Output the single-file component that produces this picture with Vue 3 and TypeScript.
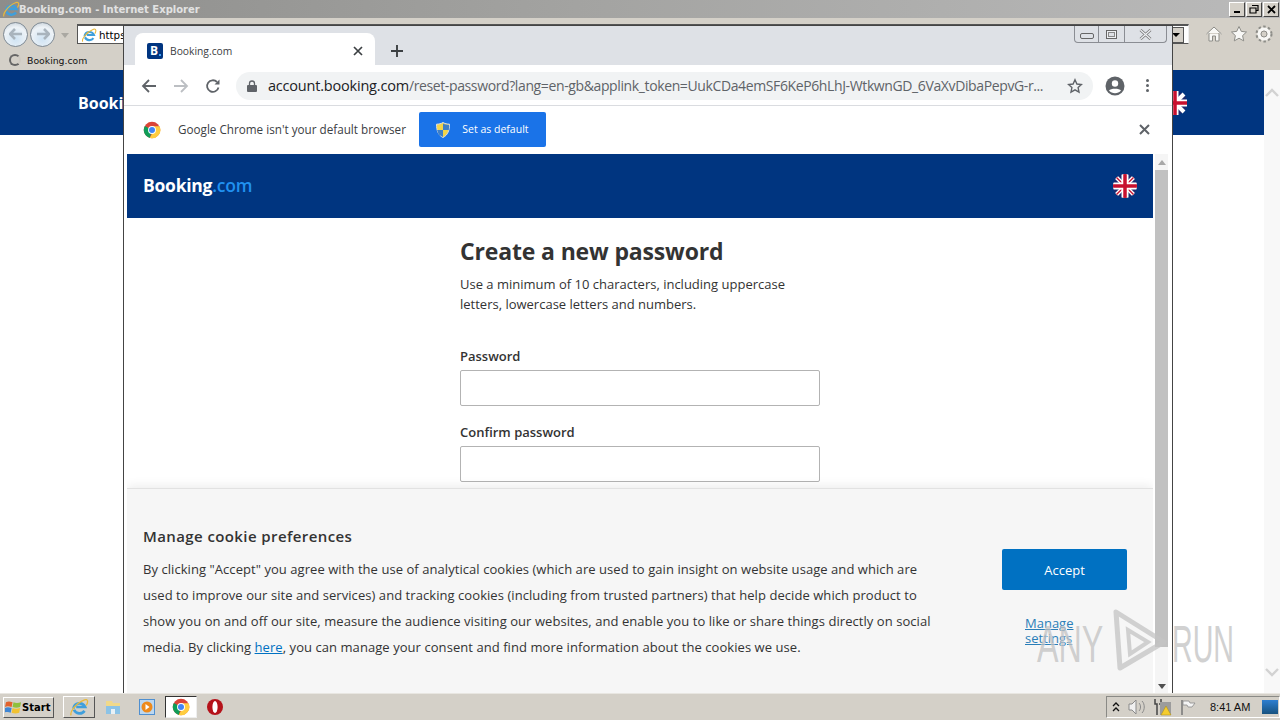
<script setup lang="ts">
const lines = [
  'By clicking "Accept" you agree with the use of analytical cookies (which are used to gain insight on website usage and which are',
  'used to improve our site and services) and tracking cookies (including from trusted partners) that help decide which product to',
  'show you on and off our site, measure the audience visiting our websites, and enable you to like or share things directly on social',
]
</script>

<template>
  <div class="desktop">
    <div class="ie-window">
      <div class="ie-title">
        <svg class="ie-logo" width="18" height="18" viewBox="0 0 18 18">
          <path d="M4 10.500a5.500 5.500 0 0 1 10.500-1.500H6.500M14 12.500a5.500 5.500 0 0 1-9.500-1" fill="none" stroke="#3f9fdc" stroke-width="2.400" />
          <path d="M2 16.500c-1.500-2 3-10.500 12-14 3-1 3.500 2 1.500 5" fill="none" stroke="#e8b93c" stroke-width="1.200" />
        </svg>
        <span class="ie-title-text">Booking.com - Internet Explorer</span>
        <div class="win-btns">
          <span class="win-btn"><i class="b-min"></i></span>
          <span class="win-btn">
            <svg width="10" height="10" viewBox="0 0 10 10"><path d="M3 1.500h6v5H7M1 4h6v5H1z" fill="none" stroke="#000" stroke-width="1.200" /></svg>
          </span>
          <span class="win-btn">
            <svg width="9" height="9" viewBox="0 0 9 9"><path d="m1 1 7 7M8 1 1 8" stroke="#000" stroke-width="1.800" /></svg>
          </span>
        </div>
      </div>
      <div class="ie-toolbar">
        <span class="nav-orb">
          <svg width="14" height="12" viewBox="0 0 14 12"><path d="M1 6h12M6 1 1 6l5 5" fill="none" stroke="#a9b4bd" stroke-width="2.600" /></svg>
        </span>
        <span class="nav-orb">
          <svg width="14" height="12" viewBox="0 0 14 12"><path d="M1 6h12M8 1l5 5-5 5" fill="none" stroke="#a9b4bd" stroke-width="2.600" /></svg>
        </span>
        <span class="nav-drop"></span>
        <div class="ie-address">
          <svg width="16" height="16" viewBox="0 0 18 18">
            <path d="M4 10.500a5.500 5.500 0 0 1 10.500-1.500H6.500M14 12.500a5.500 5.500 0 0 1-9.500-1" fill="none" stroke="#3f9fdc" stroke-width="2.400" />
            <path d="M2 16.500c-1.500-2 3-10.500 12-14 3-1 3.500 2 1.500 5" fill="none" stroke="#e8b93c" stroke-width="1.200" />
          </svg>
          <span>https</span>
          <span class="addr-drop"></span>
        </div>
        <div class="ie-tools">
          <svg width="18" height="18" viewBox="0 0 18 18"><path d="M1.500 9 9 2l7.500 7M4 8v8h3.500v-5h3v5H14V8" fill="#f8f8f6" stroke="#8d8d88" /></svg>
          <svg width="18" height="18" viewBox="0 0 18 18"><path d="m9 1.500 2.300 4.900 5.200.6-3.900 3.600 1.100 5.300L9 13.200l-4.700 2.700 1.100-5.300L1.500 7l5.200-.6z" fill="#f8f8f6" stroke="#8d8d88" /></svg>
          <svg width="18" height="18" viewBox="0 0 18 18"><circle cx="9" cy="9" r="5" fill="none" stroke="#f8f8f6" stroke-width="3.500" /><circle cx="9" cy="9" r="7.500" fill="none" stroke="#8d8d88" stroke-width="2" stroke-dasharray="2.500 2.400" /><circle cx="9" cy="9" r="3" fill="none" stroke="#8d8d88" /></svg>
        </div>
      </div>
      <div class="ie-tabs">
        <span class="spinner"></span>
        <span>Booking.com</span>
      </div>
      <div class="ie-body">
        <div class="ie-page">
          <div class="ie-blue">
            <span class="ie-brand">Booking.com</span>
            <svg class="ie-flag" width="24" height="24" viewBox="0 0 24 24">
              <circle cx="12" cy="12" r="12" fill="#1d2a6d" />
              <path d="M3 3l18 18M21 3 3 21" stroke="#fff" stroke-width="4" />
              <path d="M12 0v24M0 12h24" stroke="#fff" stroke-width="7" />
              <path d="M12 0v24M0 12h24" stroke="#c8102e" stroke-width="3.500" />
            </svg>
          </div>
        </div>
        <div class="ie-scroll">
          <svg width="14" height="10" viewBox="0 0 14 10"><path d="m1 8 6-6 6 6" fill="none" stroke="#d2d2d2" stroke-width="2.400" /></svg>
          <svg width="14" height="10" viewBox="0 0 14 10"><path d="m1 2 6 6 6-6" fill="none" stroke="#d2d2d2" stroke-width="2.400" /></svg>
        </div>
      </div>
    </div>

    <div class="taskbar">
      <button class="start">
        <svg width="17" height="16" viewBox="0 0 18 16">
          <path d="M1 3c2-1 4-1 7 0L7 8C4 7 2 7 0 8z" fill="#e2622c" />
          <path d="M9 3c2 1 5 1 8 0l-1 5c-3 1-5 1-8 0z" fill="#8fc03c" />
          <path d="M0 9c2-1 4-1 7 0l-1 5c-2-1-5-1-7 0z" fill="#3f86d4" />
          <path d="M8 9c2 1 5 1 8 0l-1 5c-3 1-5 1-8 0z" fill="#f1c232" />
        </svg>
        Start
      </button>
      <span class="task-item raised">
        <svg width="20" height="20" viewBox="0 0 18 18">
          <path d="M4 10.500a5.500 5.500 0 0 1 10.500-1.500H6.500M14 12.500a5.500 5.500 0 0 1-9.500-1" fill="none" stroke="#3f9fdc" stroke-width="2.400" />
          <path d="M2 16.500c-1.500-2 3-10.500 12-14 3-1 3.500 2 1.500 5" fill="none" stroke="#e8b93c" stroke-width="1.200" />
        </svg>
      </span>
      <span class="task-item">
        <svg width="18" height="18" viewBox="0 0 18 18">
          <path d="M2 3h6l1 2h7v11H2z" fill="#f1d98a" />
          <path d="M2 8h14v8H2z" fill="#8cc3e6" />
          <path d="M7 11h4v5H7z" fill="#e9f1f6" />
        </svg>
      </span>
      <span class="task-item">
        <svg width="18" height="18" viewBox="0 0 18 18">
          <rect x="1.500" y="1.500" width="15" height="15" fill="#bcd7f0" stroke="#4f8fd0" />
          <circle cx="9" cy="9" r="5.500" fill="#ee8a1c" />
          <path d="m7.500 6 4 3-4 3z" fill="#fff" />
        </svg>
      </span>
      <span class="task-item active">
        <svg width="18" height="18" viewBox="0 0 48 48">
          <circle cx="24" cy="24" r="22" fill="#db4437" />
          <path d="M24 24 5 13a22 22 0 0 0 13 32z" fill="#0f9d58" />
          <path d="M24 14h20a22 22 0 0 1-26 31l9-17z" fill="#ffcd40" />
          <circle cx="24" cy="24" r="10.500" fill="#fff" />
          <circle cx="24" cy="24" r="8" fill="#4285f4" />
        </svg>
      </span>
      <span class="task-item">
        <svg width="18" height="18" viewBox="0 0 18 18">
          <circle cx="9" cy="9" r="8" fill="#b5121a" />
          <ellipse cx="9" cy="9" rx="2.600" ry="6" fill="#fff" />
        </svg>
      </span>
      <div class="tray">
        <svg width="8" height="10" viewBox="0 0 8 10"><path d="m1 4 3-3 3 3M1 9l3-3 3 3" fill="none" stroke="#111" stroke-width="1.300" /></svg>
        <svg width="18" height="16" viewBox="0 0 18 16">
          <path d="M1 5h3l4-4v14l-4-4H1z" fill="#f0f0f0" stroke="#8a8a8a" />
          <path d="M11 4c2 2 2 6 0 8M14 2c3 3 3 9 0 12" fill="none" stroke="#8a8a8a" />
        </svg>
        <svg width="18" height="18" viewBox="0 0 18 18">
          <path d="M1 1v5h2v11M7 1v5H5" fill="none" stroke="#444" stroke-width="1.500" />
          <rect x="6" y="4" width="11" height="13" fill="#9c9c9c" />
          <path d="m12 8 5 9H7z" fill="#f5cc2e" stroke="#a98a12" stroke-width=".5" />
        </svg>
        <svg width="16" height="16" viewBox="0 0 16 16">
          <path d="M2 1v15" stroke="#777" stroke-width="1.500" />
          <path d="M3 2h6l1 2h5l-3 4H8L7 6H3z" fill="#f4f4f4" stroke="#8a8a8a" stroke-width=".8" />
        </svg>
        <span class="clock">8:41 AM</span>
        <span class="show-desktop"></span>
      </div>
    </div>

    <div class="chrome">
      <div class="tabstrip">
        <div class="tab">
          <span class="favicon">B<i></i></span>
          <span class="tab-title">Booking.com</span>
          <svg width="10" height="10" viewBox="0 0 10 10"><path d="m1 1 8 8M9 1 1 9" stroke="#3c4043" stroke-width="1.700" /></svg>
        </div>
        <svg class="new-tab" width="14" height="14" viewBox="0 0 14 14"><path d="M7 1v12M1 7h12" stroke="#3c4043" stroke-width="1.900" /></svg>
        <div class="chrome-ctrl">
          <span class="ctrl ctrl-min"><i></i></span>
          <span class="ctrl ctrl-max"><i></i></span>
          <span class="ctrl ctrl-close">
            <svg width="13" height="11" viewBox="0 0 13 11"><path d="m1.500 1 10 9M11.500 1l-10 9" stroke="#777" stroke-width="2.800" /><path d="m1.500 1 10 9M11.500 1l-10 9" stroke="#eef0f3" stroke-width="1.200" /></svg>
          </span>
        </div>
      </div>
      <div class="omnibar">
        <svg width="16" height="16" viewBox="0 0 16 16"><path d="M15 8H2M8 2 2 8l6 6" fill="none" stroke="#5f6368" stroke-width="1.800" /></svg>
        <svg width="16" height="16" viewBox="0 0 16 16"><path d="M1 8h13M8 2l6 6-6 6" fill="none" stroke="#bcbfc3" stroke-width="1.800" /></svg>
        <svg width="16" height="16" viewBox="0 0 16 16"><path d="M13.500 9.500A5.800 5.800 0 1 1 12 4" fill="none" stroke="#5f6368" stroke-width="1.800" /><path d="M14.500 1.500v5h-5z" fill="#5f6368" /></svg>
        <div class="url-pill">
          <svg class="lock" width="10" height="12" viewBox="0 0 10 12"><path d="M2.500 5V3.500a2.500 2.500 0 0 1 5 0V5" fill="none" stroke="#5f6368" stroke-width="1.300" /><rect y="5" width="10" height="7" rx="1" fill="#5f6368" /></svg>
          <span class="url"><b>account.booking.com</b>/reset-password?lang=en-gb&amp;applink_token=UukCDa4emSF6KeP6hLhJ-WtkwnGD_6VaXvDibaPepvG-r...</span>
          <svg class="star" width="16" height="16" viewBox="0 0 16 16"><path d="m8 1.800 1.900 4.200 4.500.5-3.300 3.100.9 4.500L8 11.800l-4 2.300.9-4.500-3.300-3.100 4.500-.5z" fill="none" stroke="#5f6368" stroke-width="1.400" /></svg>
        </div>
        <svg class="avatar" width="20" height="20" viewBox="0 0 20 20">
          <circle cx="10" cy="10" r="9.500" fill="#5f6368" />
          <circle cx="10" cy="7.500" r="3.200" fill="#fff" />
          <path d="M4 14.500c1.500-2.500 10.500-2.500 12 0-3 3.500-9 3.500-12 0z" fill="#fff" />
        </svg>
        <span class="kebab"><i></i><i></i><i></i></span>
      </div>
      <div class="infobar">
        <svg width="18" height="18" viewBox="0 0 48 48">
          <circle cx="24" cy="24" r="22" fill="#db4437" />
          <path d="M24 24 5 13a22 22 0 0 0 13 32z" fill="#0f9d58" />
          <path d="M24 14h20a22 22 0 0 1-26 31l9-17z" fill="#ffcd40" />
          <circle cx="24" cy="24" r="10.500" fill="#fff" />
          <circle cx="24" cy="24" r="8" fill="#4285f4" />
        </svg>
        <span class="info-text">Google Chrome isn't your default browser</span>
        <button class="set-default">
          <svg width="14" height="16" viewBox="0 0 14 16">
            <path d="M7 .5c2 1.200 4 1.600 6.500 1.700 0 6-1.500 10.800-6.500 13.300C2 13 .5 8.200.5 2.200 3 2.100 5 1.700 7 .5z" fill="#f2d54a" stroke="#d8dde6" />
            <path d="M7 1.500V8H1.200c.3 1.800.9 3.500 1.800 4.700L7 15V8h5.800c.2-1.600.3-3.300.3-5C11 2.900 9 2.500 7 1.500z" fill="#3e7fc8" />
          </svg>
          <span class="set-label">Set as default</span>
        </button>
        <svg class="info-close" width="11" height="11" viewBox="0 0 11 11"><path d="m1 1 9 9M10 1l-9 9" stroke="#5f6368" stroke-width="2" /></svg>
      </div>
      <div class="viewport">
        <div class="page">
          <header class="bk-header">
            <span class="bk-logo">Booking<em>.com</em></span>
            <svg width="24" height="24" viewBox="0 0 24 24">
              <defs><clipPath id="flag-clip"><circle cx="12" cy="12" r="12" /></clipPath></defs>
              <g clip-path="url(#flag-clip)">
                <rect width="24" height="24" fill="#1d2a6d" />
                <path d="M3 3l18 18M21 3 3 21" stroke="#fff" stroke-width="4" />
                <path d="M3 3l18 18M21 3 3 21" stroke="#c8102e" stroke-width="1.400" />
                <path d="M12 0v24M0 12h24" stroke="#fff" stroke-width="7" />
                <path d="M12 0v24M0 12h24" stroke="#c8102e" stroke-width="3.500" />
              </g>
            </svg>
          </header>
          <main class="form">
            <h1>Create a new password</h1>
            <p>Use a minimum of 10 characters, including uppercase letters, lowercase letters and numbers.</p>
            <label class="field first">
              <span>Password</span>
              <input type="password" />
            </label>
            <label class="field">
              <span>Confirm password</span>
              <input type="password" />
            </label>
          </main>
          <section class="cookie">
            <div class="cookie-copy">
              <h2>Manage cookie preferences</h2>
              <p v-for="line in lines" :key="line">{{ line }}</p>
              <p>media. By clicking <a href="#">here</a>, you can manage your consent and find more information about the cookies we use.</p>
            </div>
            <div class="cookie-actions">
              <button class="accept">Accept</button>
              <a class="manage" href="#">Manage<br />settings</a>
            </div>
          </section>
        </div>
        <div class="page-scroll">
          <span class="arrow-up"></span>
          <span class="thumb"></span>
          <span class="arrow-down"></span>
        </div>
      </div>
    </div>

    <div class="watermark">
      <span class="wm-any">ANY</span>
      <svg width="58" height="64" viewBox="0 0 58 64">
        <path d="M6 4 54 34 10 60z" fill="none" stroke="#c4c4c4" stroke-width="5" stroke-linejoin="round" />
        <path d="M18 22 38 34 20 46z" fill="none" stroke="#c4c4c4" stroke-width="4" />
      </svg>
      <span class="wm-run">RUN</span>
    </div>
  </div>
</template>

<style scoped>
.desktop {
  position: relative;
  width: 1280px;
  height: 720px;
  overflow: hidden;
  display: flex;
  flex-direction: column;
  font-family: "Open Sans", "Noto Sans", sans-serif;
  background: #fff;
}

/* IE behind */
.ie-window {
  flex: 1;
  min-height: 0;
  display: flex;
  flex-direction: column;
}

.ie-title {
  height: 18px;
  display: flex;
  align-items: center;
  background: linear-gradient(90deg, #8d8d8b 0%, #a3a3a1 45%, #bababa 100%);
  padding-left: 2px;
}

.ie-title-text {
  margin-left: -1px;
  color: #e2e2e2;
  font: 700 10px "DejaVu Sans", sans-serif;
}

.win-btns {
  margin-left: auto;
  display: flex;
  gap: 1px;
  padding-right: 1px;
}

.win-btn {
  width: 16px;
  height: 15px;
  background: #d4d0c8;
  border: 1px solid;
  border-color: #fff #444 #444 #fff;
  display: flex;
  align-items: center;
  justify-content: center;
  box-sizing: border-box;
}

.b-min {
  width: 6px;
  height: 2px;
  background: #000;
  margin-top: 6px;
}

.ie-toolbar {
  height: 32px;
  display: flex;
  align-items: center;
  background: #d4d0c8;
  padding: 0 7px 0 3px;
}

.nav-orb {
  width: 25px;
  height: 25px;
  margin-right: 2px;
  border-radius: 50%;
  border: 1px solid #7f8a94;
  background: radial-gradient(circle at 50% 70%, #cfe3f3, #eef3f7 60%, #b7c3cc);
  display: flex;
  align-items: center;
  justify-content: center;
  box-sizing: border-box;
}

.nav-drop {
  width: 0;
  height: 0;
  margin: 2px 8px 0 4px;
  border: 4px solid transparent;
  border-top: 5px solid #aaa8a2;
  border-bottom: 0;
}

.ie-address {
  flex: 1;
  height: 20px;
  margin-right: 16px;
  border: 1px solid #555;
  border-top-width: 2px;
  border-right-color: #eee;
  background: #fff;
  display: flex;
  align-items: center;
  gap: 2px;
  font: 10.300px "DejaVu Sans", sans-serif;
  padding: 0 4px 0 3px;
  box-sizing: border-box;
}

.addr-drop {
  width: 16px;
  height: 16px;
  margin-left: auto;
  background: #d4d0c8;
  border: 1px solid #555;
  box-sizing: border-box;
}

.addr-drop::after {
  content: "";
  display: block;
  width: 0;
  margin: 5px auto 0;
  border: 4px solid transparent;
  border-top: 4px solid #000;
  border-bottom: 0;
}

.ie-tools {
  display: flex;
  gap: 7px;
}

.ie-tabs {
  height: 20px;
  display: flex;
  align-items: center;
  gap: 6px;
  padding-left: 9px;
  background: #d4d0c8;
  font: 9.300px "DejaVu Sans", sans-serif;
  color: #111;
}

.spinner {
  width: 12px;
  height: 12px;
  border: 2px solid #666;
  border-right-color: #cfcac2;
  border-radius: 50%;
  box-sizing: border-box;
}

.ie-body {
  flex: 1;
  display: flex;
  min-height: 0;
}

.ie-page {
  flex: 1;
  background: #fff;
}

.ie-blue {
  height: 65px;
  background: #003580;
  display: flex;
  align-items: center;
  justify-content: space-between;
  padding: 0 77px 0 78px;
  box-sizing: border-box;
}

.ie-brand {
  color: #fff;
  font-size: 16px;
  font-weight: 700;
}

.ie-scroll {
  width: 16px;
  background: #f8f8f8;
  display: flex;
  flex-direction: column;
  justify-content: space-between;
  align-items: center;
  padding: 18px 0 16px;
  box-sizing: border-box;
}

/* taskbar */
.taskbar {
  height: 27px;
  flex-shrink: 0;
  display: flex;
  align-items: center;
  background: #d4d0c8;
  border-top: 1px solid #e8e6e1;
  padding: 0 0 0 3px;
  box-sizing: border-box;
}

.start {
  width: 51px;
  height: 21px;
  padding: 0 0 0 1px;
  display: flex;
  align-items: center;
  gap: 0;
  background: #d4d0c8;
  border: 1px solid;
  border-color: #fff #555 #555 #fff;
  font: 700 10px "DejaVu Sans", sans-serif;
  color: #000;
  margin-right: 9px;
}

.task-item {
  width: 32px;
  height: 22px;
  margin-right: 2px;
  display: flex;
  align-items: center;
  justify-content: center;
  box-sizing: border-box;
}

.task-item.raised {
  border: 1px solid;
  border-color: #fff #555 #555 #fff;
}

.task-item.active {
  background: #fff;
  border: 1px solid;
  border-color: #333 #eee #eee #333;
}

.tray {
  margin-left: auto;
  height: 22px;
  width: 174px;
  border: 1px solid;
  border-color: #8a8a86 #fff #fff #8a8a86;
  display: flex;
  align-items: center;
  gap: 8px;
  padding-left: 5px;
  box-sizing: border-box;
}

.clock {
  margin-left: 6px;
  font: 11px "Liberation Sans", Arial, sans-serif;
  color: #111;
  white-space: nowrap;
}

.show-desktop {
  margin-left: auto;
  width: 16px;
  height: 14px;
  margin-right: 1px;
  background: linear-gradient(180deg, #2f7fd1, #17527f);
}

/* Chrome floats over IE */
.chrome {
  position: absolute;
  left: 123px;
  top: 25px;
  width: 1050px;
  height: 668px;
  border: 1px solid #444;
  border-bottom: 0;
  box-sizing: border-box;
  background: #fff;
  display: flex;
  flex-direction: column;
}

.tabstrip {
  height: 39px;
  background: #dee1e6;
  display: flex;
  align-items: flex-end;
  padding-left: 11px;
  flex-shrink: 0;
}

.tab {
  width: 240px;
  height: 32px;
  background: #fff;
  border-radius: 8px 8px 0 0;
  display: flex;
  align-items: center;
  padding: 3px 12px 0;
  box-sizing: border-box;
}

.favicon {
  position: relative;
  width: 16px;
  height: 16px;
  border-radius: 2px;
  background: #003580;
  color: #fff;
  font: 700 12px/16px "Open Sans", sans-serif;
  text-indent: 3px;
}

.favicon i {
  position: absolute;
  right: 2px;
  bottom: 3px;
  width: 2px;
  height: 2px;
  background: #3fa2f7;
}

.tab-title {
  flex: 1;
  margin-left: 7px;
  font-size: 10.300px;
  color: #3c4043;
}

.new-tab {
  margin: 0 0 7px 15px;
}

.chrome-ctrl {
  margin-left: auto;
  align-self: flex-start;
  margin-right: 5px;
  height: 17px;
  display: flex;
  border: 1px solid #8a8d93;
  border-top: 0;
  border-radius: 0 0 4px 4px;
  box-sizing: border-box;
}

.ctrl {
  display: flex;
  align-items: center;
  justify-content: center;
  height: 100%;
}

.ctrl + .ctrl {
  border-left: 1px solid #8a8d93;
}

.ctrl-min {
  width: 23px;
}

.ctrl-min i {
  width: 12px;
  height: 4px;
  margin-top: 4px;
  border: 1px solid #666;
  border-radius: 2px;
}

.ctrl-max {
  width: 25px;
}

.ctrl-max i {
  width: 9px;
  height: 7px;
  border: 1px solid #666;
  box-shadow: inset 0 0 0 1px #eef0f3, inset 0 0 0 2px #888;
}

.ctrl-close {
  width: 41px;
}

.omnibar {
  height: 41px;
  flex-shrink: 0;
  display: flex;
  align-items: center;
  gap: 16px;
  padding: 1px 0 0 17px;
  border-bottom: 1px solid #dadce0;
  box-sizing: border-box;
}

.url-pill {
  width: 857px;
  height: 28px;
  margin-left: -1px;
  padding: 0 10px 0 11px;
  border-radius: 14px;
  background: #f1f3f4;
  display: flex;
  align-items: center;
  box-sizing: border-box;
}

.url {
  flex: 1;
  min-width: 0;
  margin-left: 11px;
  font-size: 14px;
  letter-spacing: -0.38px;
  color: #5f6368;
  white-space: nowrap;
  overflow: hidden;
}

.url b {
  font-size: 14.500px;
  letter-spacing: -0.2px;
  font-weight: 400;
  color: #202124;
}

.star {
  margin-left: 6px;
}

.avatar {
  margin-left: -4px;
}

.kebab {
  display: flex;
  flex-direction: column;
  gap: 2px;
  margin-left: 5px;
}

.kebab i {
  width: 3px;
  height: 3px;
  border-radius: 50%;
  background: #5f6368;
}

.infobar {
  height: 48px;
  flex-shrink: 0;
  display: flex;
  align-items: center;
  padding: 0 22px 1px 19px;
  box-sizing: border-box;
}

.info-text {
  margin-left: 17px;
  padding-bottom: 2px;
  font-size: 11.700px;
  color: #3c4043;
}

.set-default {
  width: 127px;
  height: 35px;
  margin-left: 13px;
  padding: 0;
  border: 0;
  border-radius: 2px;
  background: #1a73e8;
  color: #fff;
  font: 10.500px "Open Sans", sans-serif;
  display: flex;
  align-items: center;
  justify-content: center;
  gap: 12px;
}

.set-label {
  padding-bottom: 2px;
}

.info-close {
  margin-left: auto;
}

.viewport {
  flex: 1;
  min-height: 0;
  display: flex;
  padding: 0 4px 0 3px;
}

.page {
  position: relative;
  flex: 1;
  min-width: 0;
  background: #fff;
  overflow: hidden;
}

.bk-header {
  height: 64px;
  background: #003580;
  display: flex;
  align-items: center;
  justify-content: space-between;
  padding: 0 16px;
  box-sizing: border-box;
}

.bk-logo {
  color: #fff;
  font-size: 17.500px;
  line-height: 20px;
  margin-top: -3px;
  font-weight: 700;
  letter-spacing: -0.25px;
}

.bk-logo em {
  color: #2091f0;
  font-style: normal;
  font-weight: 600;
}

.form {
  width: 360px;
  margin: 0 auto;
  padding-top: 17px;
}

.form h1 {
  margin: 0;
  font-size: 23px;
  line-height: 32px;
  letter-spacing: -0.15px;
  font-weight: 700;
  color: #333;
}

.form p {
  margin: 7px 0 0;
  font-size: 13px;
  line-height: 20px;
  color: #333;
  width: 340px;
}

.field {
  display: block;
  margin-top: 16px;
}

.field.first {
  margin-top: 32px;
}

.field span {
  display: block;
  font-size: 13px;
  line-height: 20px;
  font-weight: 600;
  color: #333;
  margin-bottom: 4px;
}

.field input {
  display: block;
  width: 100%;
  height: 36px;
  border: 1px solid #b3b3b3;
  border-radius: 2px;
  background: #fff;
  box-sizing: border-box;
}

.cookie {
  position: absolute;
  left: 0;
  right: 0;
  bottom: 0;
  height: 204px;
  background: #f6f6f6;
  box-shadow: 0 -1px 0 #e2e2e2, 0 -3px 10px rgba(0, 0, 0, 0.08);
  display: flex;
  padding: 37px 26px 0 16px;
  box-sizing: border-box;
}

.cookie-copy {
  flex: 1;
  min-width: 0;
  color: #333;
}

.cookie-copy h2 {
  margin: 0 0 10px;
  font-size: 15px;
  line-height: 20px;
  font-weight: 600;
  letter-spacing: 0.4px;
}

.cookie-copy p {
  margin: 0;
  font-size: 13px;
  letter-spacing: 0.06px;
  line-height: 26px;
  white-space: nowrap;
}

.cookie-copy a {
  color: #0071c2;
}

.cookie-actions {
  width: 125px;
  padding-top: 23px;
}

.accept {
  display: block;
  width: 125px;
  height: 41px;
  padding: 0;
  border: 0;
  border-radius: 2px;
  background: #0071c2;
  color: #fff;
  font: 13px "Open Sans", sans-serif;
}

.manage {
  display: block;
  width: 50px;
  margin: 26px 0 0 23px;
  font-size: 13px;
  line-height: 15px;
  color: #2a7eb8;
}

.page-scroll {
  width: 13px;
  margin-left: 2px;
  background: #f5f5f5;
  display: flex;
  flex-direction: column;
  align-items: center;
}

.thumb {
  width: 100%;
  height: 477px;
  margin-top: 5px;
  background: #c1c1c1;
}

.arrow-up,
.arrow-down {
  width: 0;
  height: 0;
  border: 4px solid transparent;
}

.arrow-up {
  margin-top: 6px;
  border-bottom: 5px solid #a8a8a8;
  border-top: 0;
}

.arrow-down {
  margin-top: auto;
  margin-bottom: 4px;
  border-top: 5px solid #505050;
  border-bottom: 0;
}

.watermark {
  position: absolute;
  left: 1037px;
  top: 608px;
  width: 196px;
  height: 64px;
  display: flex;
  align-items: center;
  color: #c2c2c2;
  opacity: 0.75;
  font: 400 52px/64px "Liberation Sans", Arial, sans-serif;
  text-shadow: 0 0 2px #fff;
  pointer-events: none;
}

.watermark svg {
  flex-shrink: 0;
  margin-left: 9px;
}

.wm-any,
.wm-run {
  display: block;
  width: 64px;
  transform-origin: left center;
  white-space: nowrap;
}

.wm-any {
  transform: scaleX(0.62);
  margin-top: 8px;
}

.wm-run {
  transform: scaleX(0.55);
  margin-top: 8px;
  margin-left: 4px;
}
</style>
